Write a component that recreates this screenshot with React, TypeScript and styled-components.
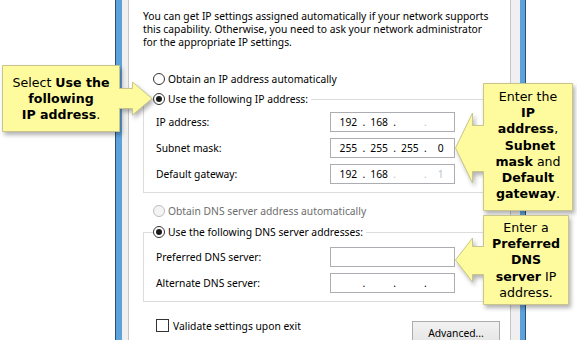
import React from "react";
import styled, { createGlobalStyle } from "styled-components";

const Global = createGlobalStyle`
  html, body { margin: 0; padding: 0; background: #fff; }
  body { width: 577px; height: 340px; overflow: hidden; }
`;

const UI_FONT = `"Noto Sans", "Open Sans", sans-serif`;
const NOTE_FONT = `"DejaVu Sans", "Liberation Sans", sans-serif`;

const Stage = styled.div`
  position: relative;
  width: 577px;
  height: 340px;
  overflow: hidden;
  background: #fff;
  display: flex;
`;

const Window = styled.div`
  margin-left: 115px;
  width: 411px;
  height: 340px;
  box-sizing: border-box;
  border-left: 1px solid #2d4f72;
  border-right: 1px solid #2d4f72;
  background: #5ea2dc;
  padding: 0 5px 0 6px;
  display: flex;
`;

const Face = styled.div`
  flex: 1;
  background: #f0f0f0;
  padding: 0 9px 0 6px;
  display: flex;
`;

const TabPage = styled.div`
  flex: 1;
  background: #fff;
  border-left: 1px solid #c6c6c6;
  border-right: 1px solid #c6c6c6;
  padding: 10px 10px 0 14px;
  font-family: ${UI_FONT};
  font-size: 10.3px;
  color: #000;
  display: flex;
  flex-direction: column;
`;

const Description = styled.div`
  line-height: 13px;
  white-space: nowrap;
`;

const DescLine = styled.div`
  height: 13px;
`;

const OptionRow = styled.div<{ $disabled?: boolean; $top?: number }>`
  display: flex;
  align-items: center;
  gap: 3px;
  height: 16px;
  margin-top: ${(p) => p.$top ?? 0}px;
  padding-left: ${(p) => (p.$top !== undefined ? 10 : 0)}px;
  color: ${(p) => (p.$disabled ? "#6d6d6d" : "#000")};
  white-space: nowrap;
`;

const RadioCircle = styled.span<{ $checked?: boolean; $disabled?: boolean }>`
  width: 12px;
  height: 12px;
  box-sizing: border-box;
  border-radius: 50%;
  border: 1px solid ${(p) => (p.$disabled ? "#bcbcbc" : "#333")};
  background: ${(p) => (p.$disabled ? "#f4f4f4" : "#fff")};
  display: flex;
  align-items: center;
  justify-content: center;
  flex: none;
  &::after {
    content: "";
    width: 6px;
    height: 6px;
    border-radius: 50%;
    background: #1a1a1a;
    display: ${(p) => (p.$checked ? "block" : "none")};
  }
`;

const Group = styled.fieldset<{ $top: number; $padTop: number }>`
  margin: ${(p) => p.$top}px 0 0;
  padding: ${(p) => p.$padTop}px 0 8px 12px;
  border: 1px solid #dcdcdc;
  min-width: 0;
`;

const Legend = styled.legend`
  padding: 0 3px 0 0;
  margin-left: -3px;
  background: #fff;
`;

const FieldGrid = styled.div`
  display: grid;
  grid-template-columns: 174px 125px;
  row-gap: 6px;
  align-items: center;
`;

const IpBox = styled.div`
  box-sizing: border-box;
  width: 125px;
  height: 20px;
  border: 1px solid #abadb3;
  background: #fff;
  display: flex;
  align-items: center;
  padding-left: 4px;
`;

const Octet = styled.span<{ $faint?: boolean }>`
  width: 27px;
  text-align: center;
  color: ${(p) => (p.$faint ? "#b8c4cc" : "#000")};
`;

const Dot = styled.span<{ $faint?: boolean }>`
  width: 4px;
  text-align: center;
  color: ${(p) => (p.$faint ? "#c4c4c4" : "#000")};
`;

const Footer = styled.div`
  display: flex;
  justify-content: space-between;
  align-items: flex-start;
  margin-top: 16px;
  padding-left: 13px;
`;

const CheckRow = styled.div`
  display: flex;
  align-items: center;
  gap: 4px;
  height: 15px;
`;

const CheckBox = styled.span`
  width: 13px;
  height: 13px;
  box-sizing: border-box;
  border: 1px solid #333;
  background: #fff;
  flex: none;
`;

const Button = styled.button`
  width: 88px;
  height: 23px;
  margin-top: 3px;
  box-sizing: border-box;
  border: 1px solid #acacac;
  background: linear-gradient(#f2f2f2, #e5e5e5);
  font-family: ${UI_FONT};
  font-size: 10.3px;
  color: #000;
  padding: 0;
`;

/* Callouts (overlay notes) */
const Callout = styled.div<{ $left: number; $top: number; $w: number; $h: number }>`
  position: absolute;
  left: ${(p) => p.$left}px;
  top: ${(p) => p.$top}px;
  width: ${(p) => p.$w}px;
  height: ${(p) => p.$h}px;
`;

const CalloutShape = styled.svg`
  position: absolute;
  inset: 0;
  overflow: visible;
  filter: drop-shadow(2px 3px 2px rgba(0, 0, 0, 0.3));
`;

const CalloutText = styled.div<{ $offset: number; $w: number; $pad: number }>`
  position: relative;
  margin-left: ${(p) => p.$offset}px;
  width: ${(p) => p.$w}px;
  padding-top: ${(p) => p.$pad}px;
  font-family: ${NOTE_FONT};
  font-size: 12.6px;
  text-align: center;
  color: #000;
  b {
    font-weight: bold;
  }
`;

const NoteLine = styled.div`
  height: 16.2px;
  line-height: 16.2px;
  white-space: pre;
`;

const FILL = "#fefb9f";
const STROKE = "#c9c48a";

function Radio({ checked, disabled, children, top }: { checked?: boolean; disabled?: boolean; children: React.ReactNode; top?: number }) {
  return (
    <OptionRow $disabled={disabled} $top={top}>
      <RadioCircle $checked={checked} $disabled={disabled} />
      <span>{children}</span>
    </OptionRow>
  );
}

type Part = { v: string; faint?: boolean };
function IpField({ parts, dots }: { parts: Part[]; dots?: boolean[] }) {
  return (
    <IpBox>
      {parts.map((p, i) => (
        <React.Fragment key={i}>
          <Octet $faint={p.faint}>{p.v}</Octet>
          {i < 3 && <Dot $faint={dots ? dots[i] : false}>.</Dot>}
        </React.Fragment>
      ))}
    </IpBox>
  );
}

export default function App() {
  return (
    <Stage>
      <Global />
      <Window>
        <Face>
          <TabPage>
            <Description>
              <DescLine>You can get IP settings assigned automatically if your network supports</DescLine>
              <DescLine>this capability. Otherwise, you need to ask your network administrator</DescLine>
              <DescLine>for the appropriate IP settings.</DescLine>
            </Description>

            <Radio top={23}>Obtain an IP address automatically</Radio>

            <Group $top={5} $padTop={5}>
              <Legend>
                <Radio checked>Use the following IP address:</Radio>
              </Legend>
              <FieldGrid>
                <span>IP address:</span>
                <IpField
                  parts={[{ v: "192" }, { v: "168" }, { v: "" }, { v: "", faint: true }]}
                  dots={[false, false, true]}
                />
                <span>Subnet mask:</span>
                <IpField parts={[{ v: "255" }, { v: "255" }, { v: "255" }, { v: "0" }]} />
                <span>Default gateway:</span>
                <IpField
                  parts={[{ v: "192" }, { v: "168" }, { v: "" }, { v: "1", faint: true }]}
                  dots={[false, true, true]}
                />
              </FieldGrid>
            </Group>

            <Radio top={11} disabled>
              Obtain DNS server address automatically
            </Radio>

            <Group $top={6} $padTop={7}>
              <Legend>
                <Radio checked>Use the following DNS server addresses:</Radio>
              </Legend>
              <FieldGrid>
                <span>Preferred DNS server:</span>
                <IpBox />
                <span>Alternate DNS server:</span>
                <IpField parts={[{ v: "" }, { v: "" }, { v: "" }, { v: "" }]} />
              </FieldGrid>
            </Group>

            <Footer>
              <CheckRow>
                <CheckBox />
                <span>Validate settings upon exit</span>
              </CheckRow>
              <Button>Advanced...</Button>
            </Footer>
          </TabPage>
        </Face>
      </Window>

      <Callout $left={2} $top={65} $w={151} $h={67}>
        <CalloutShape width="151" height="67" viewBox="0 0 151 67">
          <polygon
            points="0.5,0.5 117.5,0.5 117.5,23.5 130.5,23.5 130.5,17 150,33.5 130.5,50 130.5,43.5 117.5,43.5 117.5,66.5 0.5,66.5"
            fill={FILL}
            stroke={STROKE}
          />
        </CalloutShape>
        <CalloutText $offset={0} $w={118} $pad={10}>
          <NoteLine>Select <b>Use the</b></NoteLine>
          <NoteLine><b>following</b></NoteLine>
          <NoteLine><b>IP address</b>.</NoteLine>
        </CalloutText>
      </Callout>

      <Callout $left={455} $top={83} $w={118} $h={129}>
        <CalloutShape width="118" height="129" viewBox="0 0 118 129">
          <polygon
            points="117.5,0.5 28.5,0.5 28.5,42.5 17.5,42.5 17.5,30 0.5,65 17.5,100 17.5,88.5 28.5,88.5 28.5,127.5 117.5,127.5"
            fill={FILL}
            stroke={STROKE}
          />
        </CalloutShape>
        <CalloutText $offset={28} $w={90} $pad={6}>
          <NoteLine>Enter the</NoteLine>
          <NoteLine><b>IP</b></NoteLine>
          <NoteLine><b>address</b>,</NoteLine>
          <NoteLine> <b>Subnet</b></NoteLine>
          <NoteLine><b>mask</b> and</NoteLine>
          <NoteLine><b>Default</b></NoteLine>
          <NoteLine><b>gateway</b>.</NoteLine>
        </CalloutText>
      </Callout>

      <Callout $left={455} $top={215} $w={114} $h={91}>
        <CalloutShape width="114" height="91" viewBox="0 0 114 91">
          <polygon
            points="113.5,0.5 28.5,0.5 28.5,31.5 17.5,31.5 17.5,23 0.5,45 17.5,67 17.5,59.5 28.5,59.5 28.5,89.5 113.5,89.5"
            fill={FILL}
            stroke={STROKE}
          />
        </CalloutShape>
        <CalloutText $offset={28} $w={86} $pad={5}>
          <NoteLine>Enter a</NoteLine>
          <NoteLine><b>Preferred</b></NoteLine>
          <NoteLine><b>DNS</b></NoteLine>
          <NoteLine><b>server</b> IP</NoteLine>
          <NoteLine>address.</NoteLine>
        </CalloutText>
      </Callout>
    </Stage>
  );
}
